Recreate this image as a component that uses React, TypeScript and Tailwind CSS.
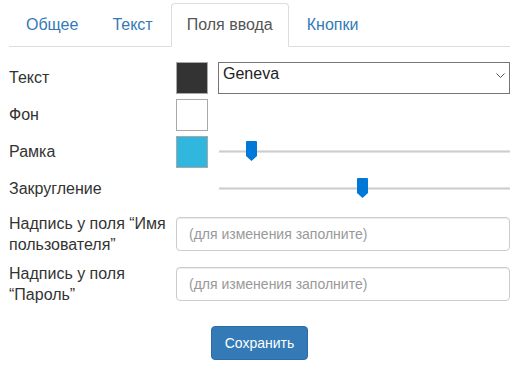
import React from 'react'

const TABS = ['Общее', 'Текст', 'Поля ввода', 'Кнопки']

function Swatch({ color }: { color: string }) {
  return <div className={`h-[32px] w-[32px] border border-[#a9a9a9] ${color}`} />
}

function Slider({ value }: { value: number }) {
  return (
    <div className="relative h-[32px] w-full">
      <div className="absolute left-[1px] right-0 top-[14px] h-[3px] border-y border-[#e3e3e3] bg-[#cdcdcd]" />
      <svg
        className="absolute top-[5px]"
        style={{ left: `calc(${value * 100}% - ${value * 11}px)` }}
        width="11"
        height="20"
        viewBox="0 0 11 20"
      >
        <path d="M1 0 H10 Q11 0 11 1 V15 L5.5 20 L0 15 V1 Q0 0 1 0 Z" fill="#0078d7" />
      </svg>
    </div>
  )
}

function Row({ label, swatch, children }: { label: string; swatch?: string; children?: React.ReactNode }) {
  return (
    <div className="flex h-[32px] items-center">
      <div className="w-[167px] text-[16px] text-[#333]">{label}</div>
      <div className="w-[32px]">{swatch && <Swatch color={swatch} />}</div>
      <div className="ml-[10px] flex-1">{children}</div>
    </div>
  )
}

function TextRow({ label }: { label: string }) {
  return (
    <div className="flex items-center">
      <div className="w-[167px] text-[16px] leading-[21px] text-[#333]">{label}</div>
      <input
        placeholder="(для изменения заполните)"
        className="h-[34px] flex-1 rounded-[4px] border border-[#ccc] px-[12px] text-[14px] text-[#555] placeholder:text-[#999] shadow-[inset_0_1px_1px_rgba(0,0,0,0.075)] outline-none"
      />
    </div>
  )
}

export default function App() {
  return (
    <div className="w-[519px] px-[9px] pt-[3px] font-['Liberation_Sans',Arial,sans-serif]">
      <ul className="flex border-b border-[#ddd] pl-[1px]">
        {TABS.map((t, i) => (
          <li key={t} className="-mb-px mr-[2px]">
            <span
              className={
                i === 2
                  ? 'block rounded-t-[4px] border border-[#ddd] border-b-transparent bg-white px-[15px] py-[10px] text-[16px] leading-[22px] text-[#555]'
                  : 'block border border-transparent px-[15px] py-[10px] text-[16px] leading-[22px] text-[#337ab7]'
              }
            >
              {t}
            </span>
          </li>
        ))}
      </ul>

      <div className="mt-[15px] flex flex-col gap-[5px]">
        <Row label="Текст" swatch="bg-[#333333]">
          <div className="flex h-[32px] items-start justify-between border border-[#767676] bg-white pl-[4px] pr-[4px] pt-[2px] text-[16px] leading-[18px] text-[#222]">
            <span>Geneva</span>
            <svg className="mt-[8px]" width="9" height="5" viewBox="0 0 9 5">
              <path d="M0.5 0.5 L4.5 4.5 L8.5 0.5" fill="none" stroke="#555" strokeWidth="1" />
            </svg>
          </div>
        </Row>
        <Row label="Фон" swatch="bg-white" />
        <Row label="Рамка" swatch="bg-[#31b7de]">
          <Slider value={0.1} />
        </Row>
        <Row label="Закругление">
          <Slider value={0.495} />
        </Row>
      </div>

      <div className="mt-[8px] flex flex-col gap-[8px]">
        <TextRow label="Надпись у поля “Имя пользователя”" />
        <TextRow label="Надпись у поля “Пароль”" />
      </div>

      <div className="mt-[21px] flex justify-center">
        <button className="h-[34px] rounded-[4px] border border-[#2e6da4] bg-[#337ab7] px-[13px] text-[14px] text-white">
          Сохранить
        </button>
      </div>
    </div>
  )
}
